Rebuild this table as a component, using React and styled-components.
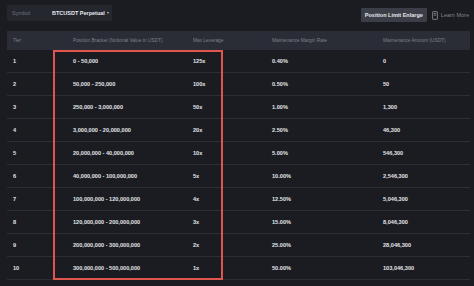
import React from 'react';
import styled, { createGlobalStyle } from 'styled-components';

const GlobalStyle = createGlobalStyle`
  body {
    margin: 0;
    background: #1b1c22;
    font-family: "Liberation Sans", Arial, sans-serif;
  }
`;

const Page = styled.div`
  width: 474px;
  height: 286px;
  background: #1b1c22;
  padding: 4px 5px 0 7px;
  box-sizing: border-box;
  overflow: hidden;
  position: relative;
`;

const TopBar = styled.div`
  display: flex;
  align-items: center;
  justify-content: space-between;
  height: 17px;
`;

const SymbolBox = styled.div`
  display: flex;
  align-items: center;
  width: 105px;
  height: 16px;
  background: #25272e;
  border-radius: 2px;
  padding-left: 5px;
  box-sizing: border-box;
  font-size: 5.5px;
`;

const SymbolLabel = styled.span`
  color: #6e727c;
  width: 40px;
`;

const SymbolValue = styled.span`
  color: #e8e9ec;
  font-weight: bold;
  display: flex;
  align-items: center;
  gap: 2px;
`;

const Caret = styled.span`
  width: 0;
  height: 0;
  border-left: 1.5px solid transparent;
  border-right: 1.5px solid transparent;
  border-top: 2px solid #c8cad0;
`;

const Actions = styled.div`
  display: flex;
  align-items: center;
  gap: 5px;
  margin-top: 5px;
`;

const EnlargeButton = styled.div`
  background: #3b3e46;
  color: #e6e7ea;
  font-size: 5.5px;
  font-weight: bold;
  height: 14px;
  padding: 0 4px;
  display: flex;
  align-items: center;
  border-radius: 1px;
`;

const LearnMore = styled.div`
  display: flex;
  align-items: center;
  gap: 3px;
  color: #80848d;
  font-size: 5.5px;
`;

const Table = styled.div`
  margin-top: 10px;
  width: 463px;
`;

const Row = styled.div`
  display: grid;
  grid-template-columns: 60px 120px 79px 111px 1fr;
  align-items: center;
  height: ${p => (p.$head ? 19 : 23)}px;
  padding-left: 6px;
  box-sizing: border-box;
  background: ${p => (p.$head ? '#2a2d35' : 'transparent')};
  border-bottom: ${p => (p.$head ? 'none' : '1px solid #2c2e35')};
  font-size: ${p => (p.$head ? 4.8 : 5.6)}px;
  color: ${p => (p.$head ? '#7d818a' : '#e3e4e7')};
  font-weight: ${p => (p.$head ? 'normal' : 'bold')};
  white-space: nowrap;
`;

const Highlight = styled.div`
  position: absolute;
  left: 53px;
  top: 50px;
  width: 170px;
  height: 230px;
  border: 2px solid #e0564f;
  box-sizing: border-box;
  pointer-events: none;
`;

const rows = [
  ['1', '0 - 50,000', '125x', '0.40%', '0'],
  ['2', '50,000 - 250,000', '100x', '0.50%', '50'],
  ['3', '250,000 - 3,000,000', '50x', '1.00%', '1,300'],
  ['4', '3,000,000 - 20,000,000', '20x', '2.50%', '46,300'],
  ['5', '20,000,000 - 40,000,000', '10x', '5.00%', '546,300'],
  ['6', '40,000,000 - 100,000,000', '5x', '10.00%', '2,546,300'],
  ['7', '100,000,000 - 120,000,000', '4x', '12.50%', '5,046,300'],
  ['8', '120,000,000 - 200,000,000', '3x', '15.00%', '8,046,300'],
  ['9', '200,000,000 - 300,000,000', '2x', '25.00%', '28,046,300'],
  ['10', '300,000,000 - 500,000,000', '1x', '50.00%', '103,046,300'],
];

const BookIcon = () => (
  <svg width="6" height="9" viewBox="0 0 6 9" fill="none" stroke="#80848d" strokeWidth="0.9">
    <rect x="0.6" y="0.6" width="4.8" height="7.8" rx="0.5" />
    <line x1="1.8" y1="2.5" x2="4.2" y2="2.5" />
    <line x1="1.8" y1="4.2" x2="4.2" y2="4.2" />
  </svg>
);

export default function App() {
  return (
    <>
      <GlobalStyle />
      <Page>
        <TopBar>
          <SymbolBox>
            <SymbolLabel>Symbol</SymbolLabel>
            <SymbolValue>
              BTCUSDT Perpetual
              <Caret />
            </SymbolValue>
          </SymbolBox>
          <Actions>
            <EnlargeButton>Position Limit Enlarge</EnlargeButton>
            <LearnMore>
              <BookIcon />
              Learn More
            </LearnMore>
          </Actions>
        </TopBar>
        <Table>
          <Row $head>
            <span>Tier</span>
            <span>Position Bracket (Notional Value in USDT)</span>
            <span>Max Leverage</span>
            <span>Maintenance Margin Rate</span>
            <span>Maintenance Amount (USDT)</span>
          </Row>
          {rows.map(r => (
            <Row key={r[0]}>
              {r.map((c, i) => (
                <span key={i}>{c}</span>
              ))}
            </Row>
          ))}
        </Table>
        <Highlight />
      </Page>
    </>
  );
}
